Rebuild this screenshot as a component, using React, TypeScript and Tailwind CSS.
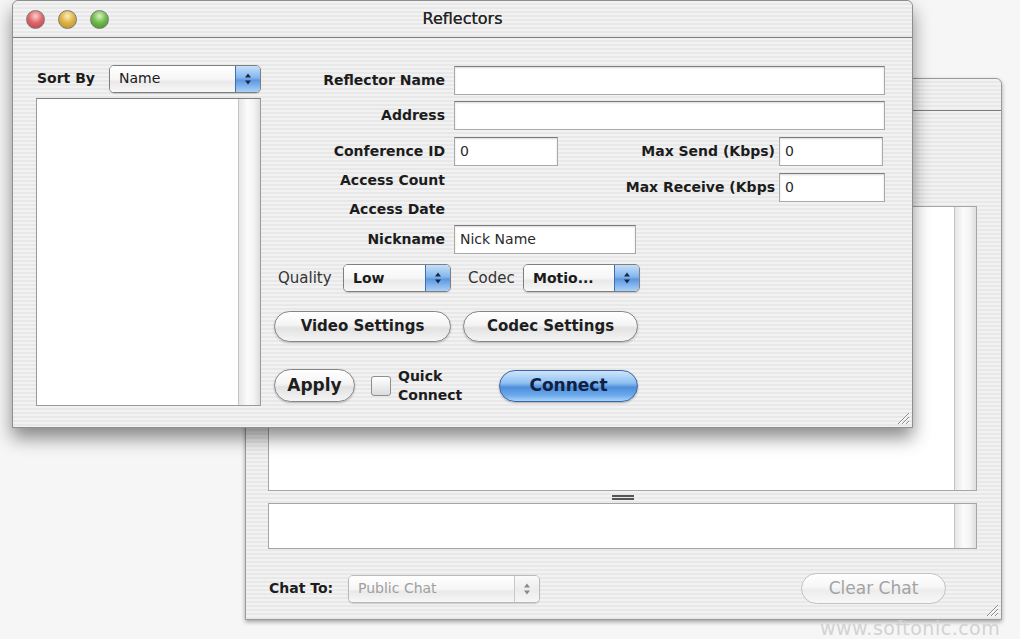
import React from "react";

const pin =
  "bg-[repeating-linear-gradient(180deg,#f2f2f2_0px,#f2f2f2_2px,#e8e8e8_2px,#e8e8e8_4px)]";

const Light = ({ color }: { color: string }) => (
  <span className={`block w-[19px] h-[19px] rounded-full border border-[#7b7b7b] ${color}`} />
);

const TitleBar = ({ title, lights }: { title?: string; lights?: boolean }) => (
  <div className={`relative flex items-center h-full border-b border-[#7e7e7e] ${pin}`}>
    {lights && (
      <div className="flex gap-[13px] pl-[13px]">
        <Light color="bg-[radial-gradient(circle_at_50%_30%,#fbd0d0_0%,#e0696e_45%,#b83a40_100%)]" />
        <Light color="bg-[radial-gradient(circle_at_50%_30%,#fbecc0_0%,#e0b446_45%,#b88a1e_100%)]" />
        <Light color="bg-[radial-gradient(circle_at_50%_30%,#d7f3c4_0%,#72bd4c_45%,#3f8b25_100%)]" />
      </div>
    )}
    {title && (
      <span className="absolute inset-x-0 text-center text-[16px] text-[#262626] [text-shadow:0_0_0.4px_#262626]">
        {title}
      </span>
    )}
  </div>
);

const Arrows = ({ dim }: { dim?: boolean }) => (
  <svg width="8" height="14" viewBox="0 0 8 14">
    <path d="M4 1.5 L7 5.5 H1 Z M4 12.5 L7 8.5 H1 Z" fill={dim ? "#8a8a8a" : "#15284a"} />
  </svg>
);

const Popup = ({
  text,
  className,
  bold,
  disabled,
}: {
  text: string;
  className: string;
  bold?: boolean;
  disabled?: boolean;
}) => (
  <div
    className={`flex h-[28px] rounded-[5px] border overflow-hidden shadow-[0_1px_1px_rgba(0,0,0,0.15)] ${
      disabled ? "border-[#b9b9b9]" : "border-[#7f7f7f]"
    } ${className}`}
  >
    <span
      className={`flex-1 flex items-center pl-[9px] text-[14px] bg-[linear-gradient(180deg,#ffffff_0%,#f6f6f6_50%,#e9e9e9_60%,#f7f7f7_100%)] ${
        bold ? "font-bold" : ""
      } ${disabled ? "text-[#a0a0a0]" : "text-[#1a1a1a]"}`}
    >
      {text}
    </span>
    <span
      className={`w-[25px] flex items-center justify-center border-l ${
        disabled
          ? "border-[#c8c8c8] bg-[linear-gradient(180deg,#fafafa_0%,#ececec_55%,#f6f6f6_100%)]"
          : "border-[#3f6fb0] bg-[linear-gradient(180deg,#c6e0fa_0%,#84b6ec_45%,#5d98e0_55%,#a9d1f8_100%)]"
      }`}
    >
      <Arrows dim={disabled} />
    </span>
  </div>
);

const Field = ({ className, value }: { className: string; value?: string }) => (
  <div
    className={`h-[29px] flex items-center pl-[5px] bg-white border border-[#a9a9a9] border-t-[#7c7c7c] shadow-[inset_0_1px_2px_rgba(0,0,0,0.15)] text-[14px] text-[#2a2a2a] ${className}`}
  >
    {value}
  </div>
);

const Pill = ({
  children,
  className,
  blue,
  disabled,
}: {
  children: React.ReactNode;
  className: string;
  blue?: boolean;
  disabled?: boolean;
}) => (
  <div
    className={`flex items-center justify-center rounded-full border text-[15px] ${
      blue
        ? "border-[#3a66a6] text-[#0f2244] font-bold bg-[linear-gradient(180deg,#cfe5fb_0%,#8ec0f2_40%,#4e8edb_55%,#6aa8ea_80%,#a7d3fa_100%)] shadow-[0_1px_2px_rgba(0,0,0,0.3)]"
        : disabled
        ? "border-[#c2c2c2] text-[#a3a3a3] bg-[linear-gradient(180deg,#ffffff_0%,#f6f6f6_45%,#ececec_55%,#f8f8f8_100%)]"
        : "border-[#858585] text-[#1e1e1e] font-bold bg-[linear-gradient(180deg,#ffffff_0%,#f4f4f4_45%,#e2e2e2_55%,#f5f5f5_100%)] shadow-[0_1px_2px_rgba(0,0,0,0.25)]"
    } ${className}`}
  >
    {children}
  </div>
);

const Grip = () => (
  <svg width="16" height="16" viewBox="0 0 16 16">
    <path d="M15 4 L4 15 M15 8 L8 15 M15 12 L12 15" stroke="#8b8b8b" strokeWidth="1" />
    <path d="M15 5 L5 15 M15 9 L9 15 M15 13 L13 15" stroke="#ffffff" strokeWidth="1" />
  </svg>
);

const Scroll = () => (
  <div className="w-[22px] border-l border-[#c4c4c4] bg-[linear-gradient(90deg,#e6e6e6_0%,#fbfbfb_40%,#f4f4f4_70%,#dedede_100%)]" />
);

const Label = ({
  children,
  className,
  left,
}: {
  children: React.ReactNode;
  className?: string;
  left?: boolean;
}) => (
  <span
    className={`font-bold text-[14px] text-[#1c1c1c] ${left ? "text-left" : "text-right"} ${className ?? ""}`}
  >
    {children}
  </span>
);

export default function App() {
  return (
    <div className="relative w-[1020px] h-[639px] overflow-hidden bg-[#f6f6f6] font-['DejaVu_Sans',sans-serif]">
      {/* back window */}
      <div className="absolute left-[245px] top-[78px] w-[757px] h-[542px] flex flex-col rounded-t-[6px] border border-[#9a9a9a] shadow-[0_2px_4px_rgba(0,0,0,0.35)] bg-[#efefef]">
        <div className="h-[32px] rounded-t-[6px] overflow-hidden">
          <TitleBar />
        </div>
        <div className={`flex-1 flex flex-col pl-[22px] pr-[24px] pt-[95px] ${pin}`}>
          <div className="h-[285px] flex border border-[#a6a6a6] bg-white">
            <div className="flex-1" />
            <Scroll />
          </div>
          <div className="h-[12px] flex items-center justify-center">
            <div className="w-[22px] h-[5px] border-y-2 border-[#555]" />
          </div>
          <div className="h-[46px] flex border border-[#a6a6a6] bg-white">
            <div className="flex-1" />
            <Scroll />
          </div>
          <div className="mt-[24px] h-[31px] flex items-center">
            <Label left className="pl-[1px] w-[80px]">
              Chat To:
            </Label>
            <Popup text="Public Chat" className="w-[192px]" disabled />
            <div className="flex-1" />
            <Pill disabled className="w-[145px] h-[31px] mr-[31px] text-[17px]">
              Clear Chat
            </Pill>
          </div>
        </div>
        <div className="absolute right-[2px] bottom-[2px]">
          <Grip />
        </div>
      </div>

      {/* front window */}
      <div className="absolute left-[12px] top-0 w-[901px] h-[428px] flex flex-col rounded-t-[6px] border border-[#8e8e8e] shadow-[0_10px_18px_rgba(0,0,0,0.45)] bg-[#efefef]">
        <div className="h-[37px] rounded-t-[6px] overflow-hidden">
          <TitleBar title="Reflectors" lights />
        </div>
        <div className={`relative flex-1 flex ${pin}`}>
          {/* left column */}
          <div className="ml-[23px] w-[225px] pt-[27px] flex flex-col">
            <div className="h-[27px] flex items-center">
              <Label left className="w-[73px] pl-[1px]">
                Sort By
              </Label>
              <Popup text="Name" className="w-[152px] h-[27px]" />
            </div>
            <div className="mt-[6px] h-[308px] flex border border-[#9a9a9a] border-t-[#7f7f7f] bg-white">
              <div className="flex-1" />
              <Scroll />
            </div>
          </div>

          {/* right column */}
          <div className="ml-[13px] pt-[28px] flex flex-col">
            <div className="h-[29px] flex items-center">
              <Label className="w-[171px]">Reflector Name</Label>
              <Field className="ml-[9px] w-[431px]" />
            </div>
            <div className="mt-[6px] h-[29px] flex items-center">
              <Label className="w-[171px]">Address</Label>
              <Field className="ml-[9px] w-[431px]" />
            </div>
            <div className="mt-[7px] h-[29px] flex items-center">
              <Label className="w-[171px]">Conference ID</Label>
              <Field className="ml-[9px] w-[104px]" value="0" />
              <Label className="w-[221px] pr-[4px]">Max Send (Kbps)</Label>
              <Field className="w-[104px]" value="0" />
            </div>
            <div className="h-[59px] flex items-start">
              <div className="w-[171px] pt-[4px] flex flex-col gap-[9px]">
                <Label className="leading-[20px]">Access Count</Label>
                <Label className="leading-[20px]">Access Date</Label>
              </div>
              <div className="ml-[9px] mt-[7px] w-[431px] h-[28px] flex items-center">
                <Label className="flex-1 pr-[4px]">Max Receive (Kbps</Label>
                <Field className="w-[106px] h-[28px]" value="0" />
              </div>
            </div>
            <div className="h-[29px] flex items-center">
              <Label className="w-[171px]">Nickname</Label>
              <Field className="ml-[9px] w-[182px]" value="Nick Name" />
            </div>
            <div className="mt-[10px] h-[28px] flex items-center">
              <span className="ml-[4px] w-[65px] text-[15px] text-[#333]">Quality</span>
              <Popup text="Low" className="w-[108px]" bold />
              <span className="ml-[17px] w-[55px] text-[15px] text-[#333]">Codec</span>
              <Popup text="Motio..." className="w-[117px]" bold />
            </div>
            <div className="mt-[19px] h-[31px] flex items-center gap-[12px]">
              <Pill className="w-[177px] h-[31px]">Video Settings</Pill>
              <Pill className="w-[175px] h-[31px]">Codec Settings</Pill>
            </div>
            <div className="mt-[27px] h-[33px] flex items-center">
              <Pill className="w-[81px] h-[33px] text-[17px]">Apply</Pill>
              <div className="ml-[16px] w-[20px] h-[20px] rounded-[3px] border border-[#8e8e8e] bg-[linear-gradient(180deg,#ffffff_0%,#eeeeee_50%,#dcdcdc_100%)]" />
              <div className="ml-[7px] w-[90px] flex flex-col leading-[19px]">
                <Label left>Quick</Label>
                <Label left>Connect</Label>
              </div>
              <Pill blue className="ml-[11px] w-[139px] h-[32px] text-[17px]">
                Connect
              </Pill>
            </div>
          </div>
          <div className="absolute right-[2px] bottom-[2px]">
            <Grip />
          </div>
        </div>
      </div>

      <span className="absolute left-[820px] top-[618px] text-[19px] leading-[20px] tracking-[0.5px] text-[#d2d2d2]">
        www.softonic.com
      </span>
    </div>
  );
}
